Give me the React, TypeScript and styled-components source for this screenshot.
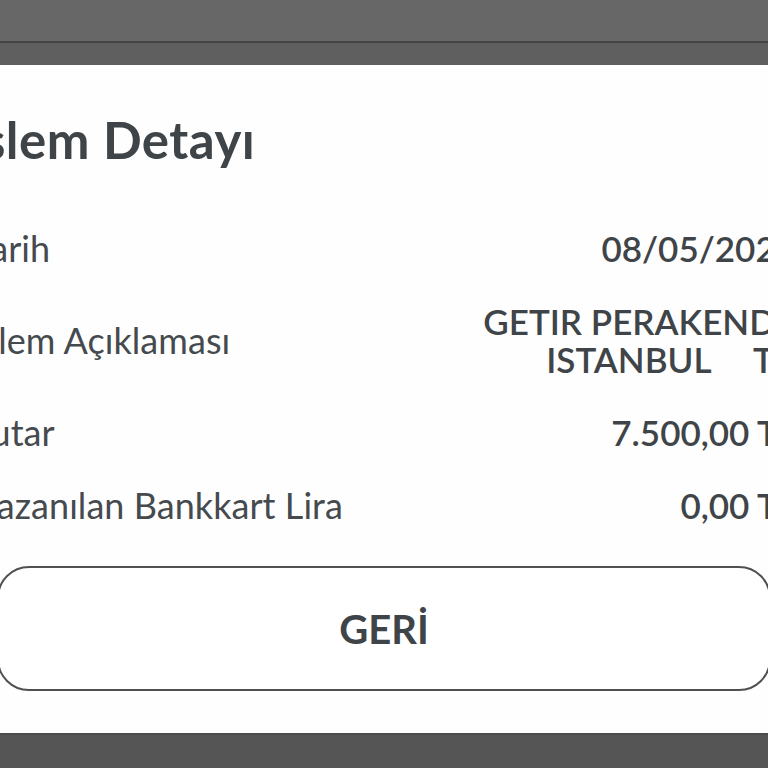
import React from 'react';
import styled, { createGlobalStyle } from 'styled-components';

const GlobalStyle = createGlobalStyle`
  html, body {
    margin: 0;
    padding: 0;
    width: 768px;
    height: 768px;
    overflow: hidden;
    background: #555555;
    font-family: Lato, "Open Sans", sans-serif;
  }
`;

const Screen = styled.div`
  width: 768px;
  height: 768px;
  display: flex;
  flex-direction: column;
  overflow: hidden;
`;

const TopBar = styled.div`
  height: 41px;
  flex: none;
  background: #676767;
  border-bottom: 2px solid #454545;
`;

const Backdrop = styled.div`
  height: 22px;
  flex: none;
  background: #5f5f5f;
`;

const Sheet = styled.div`
  flex: none;
  height: 668px;
  width: 848px;
  margin-left: -40px;
  box-sizing: border-box;
  padding: 47px 12px 0 20px;
  background: #fefefe;
  color: #3f4448;
  display: flex;
  flex-direction: column;
`;

const Title = styled.h1`
  margin: 0 0 0 -12px;
  font-size: 51px;
  line-height: 56px;
  font-weight: 700;
  letter-spacing: 0.5px;
  color: #3f4448;
`;

const Rows = styled.div`
  display: flex;
  flex-direction: column;
  gap: 35px;
  margin-top: 61px;
`;

const Row = styled.div`
  display: flex;
  align-items: center;
  justify-content: space-between;
`;

const Label = styled.span`
  margin-left: -7px;
  font-size: 36px;
  line-height: 38px;
  font-weight: 400;
  letter-spacing: 0.05px;
  color: #454a4e;
`;

const Value = styled.span`
  font-size: 35px;
  line-height: 38px;
  font-weight: 600;
  text-align: right;
  white-space: pre;
  color: #3f4448;
`;

const BackButton = styled.button`
  margin: 42px 25px 0 17px;
  height: 125px;
  border: 2px solid #505050;
  border-radius: 32px;
  background: #ffffff;
  font-family: Lato, "Open Sans", sans-serif;
  font-size: 40px;
  font-weight: 700;
  color: #3f4448;
`;

const BottomBar = styled.div`
  flex: 1;
  background: #555555;
  border-top: 2px solid #4c4c4c;
`;

const rows = [
  { label: 'Tarih', value: '08/05/2024' },
  { label: 'İşlem Açıklaması', value: 'GETIR PERAKENDE\nISTANBUL     TR' },
  { label: 'Tutar', value: '7.500,00 TL' },
  { label: 'Kazanılan Bankkart Lira', value: '0,00 TL' },
];

export default function App() {
  return (
    <Screen>
      <GlobalStyle />
      <TopBar />
      <Backdrop />
      <Sheet>
        <Title>İşlem Detayı</Title>
        <Rows>
          {rows.map((r) => (
            <Row key={r.label}>
              <Label>{r.label}</Label>
              <Value>{r.value}</Value>
            </Row>
          ))}
        </Rows>
        <BackButton>GERİ</BackButton>
      </Sheet>
      <BottomBar />
    </Screen>
  );
}
